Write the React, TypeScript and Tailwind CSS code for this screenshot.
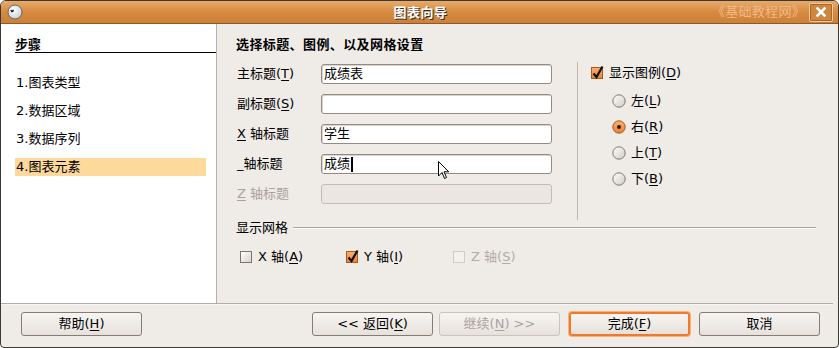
import React from 'react';

const font = { fontFamily: '"DejaVu Sans", "Noto Sans CJK SC", sans-serif' };

const U = ({ c }: { c: string }) => <span className="underline underline-offset-2">{c}</span>;

const CheckBox = ({ checked, disabled }: { checked?: boolean; disabled?: boolean }) => {
  if (checked) {
    return (
      <span className="relative inline-block w-[12px] h-[12px] border border-[#a4591d] bg-gradient-to-b from-[#f9ad6a] to-[#ee8434] shrink-0">
        <svg viewBox="0 0 14 14" className="absolute left-[-1px] top-[-3px] w-[14px] h-[14px] overflow-visible">
          <path d="M2.5 8.5 L5.5 12 L11.5 1.5" fill="none" stroke="#111" strokeWidth="2.2" strokeLinejoin="miter" />
        </svg>
      </span>
    );
  }
  return (
    <span
      className={`inline-block w-[12px] h-[12px] border shrink-0 ${
        disabled ? 'border-[#d2cbc4] bg-[#f3f0ed]' : 'border-[#7d756d] bg-gradient-to-br from-white to-[#d8d3ce]'
      }`}
    />
  );
};

const Radio = ({ checked }: { checked?: boolean }) => (
  <svg viewBox="0 0 14 14" className="w-[14px] h-[14px] shrink-0">
    <defs>
      <linearGradient id="rg" x1="0" y1="0" x2="1" y2="1">
        <stop offset="0" stopColor="#ffffff" />
        <stop offset="1" stopColor="#cfc9c3" />
      </linearGradient>
      <linearGradient id="ro" x1="0" y1="0" x2="0" y2="1">
        <stop offset="0" stopColor="#fbb272" />
        <stop offset="1" stopColor="#ed7f2f" />
      </linearGradient>
    </defs>
    <circle cx="7" cy="7" r="6.2" fill={checked ? 'url(#ro)' : 'url(#rg)'} stroke={checked ? '#a4591d' : '#7f7871'} strokeWidth="1" />
    {checked && <circle cx="7" cy="7" r="2" fill="#222" />}
  </svg>
);

const Field = ({ label, value, disabled, caret }: { label: React.ReactNode; value?: string; disabled?: boolean; caret?: boolean }) => (
  <div className="flex items-center h-[20px]">
    <div className={`w-[84px] text-[13px] leading-[16px] ${disabled ? 'text-[#aaa39c]' : 'text-black'}`}>{label}</div>
    <div
      className={`w-[231px] h-[20px] rounded-[3px] border flex items-center pl-[2px] text-[13px] leading-[16px] ${
        disabled ? 'border-[#c4bcb4] bg-[#ebe6e1]' : 'border-[#978b7f] bg-white shadow-[inset_1px_1px_0_#d9d4cf]'
      }`}
    >
      {value}
      {caret && <span className="inline-block w-[2px] h-[15px] bg-black ml-[1px]" />}
    </div>
  </div>
);

const Button = ({ children, disabled, focus, className = '' }: { children: React.ReactNode; disabled?: boolean; focus?: boolean; className?: string }) => (
  <div
    className={`h-[24px] rounded-[3px] flex items-center justify-center text-[13px] leading-[16px] bg-gradient-to-b from-[#f6f4f2] via-[#efebe7] to-[#e6e1dc] ${
      focus ? 'border-2 border-[#f07a28] shadow-[0_0_0_1px_#f6b37c]' : disabled ? 'border border-[#cbc4bd] text-[#aaa39c]' : 'border border-[#877c71]'
    } ${className}`}
  >
    {children}
  </div>
);

export default function App() {
  return (
    <div style={font} className="w-[839px] h-[348px] overflow-hidden bg-[#efebe7] border border-[#3b3935] rounded-t-[6px] rounded-b-[4px] flex flex-col text-black select-none">
      {/* title bar */}
      <div className="relative h-[23px] shrink-0 bg-gradient-to-b from-[#e8aa6a] via-[#d68b40] to-[#cd8039] border-b border-[#8a5a2c] flex items-center">
        <svg viewBox="0 0 16 16" className="ml-[6px] w-[16px] h-[16px]">
          <defs>
            <radialGradient id="ic" cx="0.4" cy="0.35" r="0.7">
              <stop offset="0" stopColor="#ffffff" />
              <stop offset="1" stopColor="#c9cdd2" />
            </radialGradient>
          </defs>
          <circle cx="8" cy="8" r="7" fill="url(#ic)" stroke="#5f6670" strokeWidth="1" />
          <path d="M3.5 6.5 L7 6.2 M4 7.6 L6.5 7.4" stroke="#222" strokeWidth="1.1" />
        </svg>
        <div className="absolute left-0 right-0 top-0 h-[23px] flex items-center justify-center pointer-events-none">
          <span className="ml-[2px] text-[13px] font-bold text-white tracking-[0.5px] [text-shadow:1px_1px_0_#3b2a18]">图表向导</span>
        </div>
        <div className="ml-auto flex items-center">
          <span className="text-[13px] text-[#f2b98a] tracking-[0.3px] mr-[4px]">《基础教程网》</span>
          <div className="w-[24px] h-[19px] mr-[5px] rounded-[2px] border border-[#f3c79b] bg-[#cf8740] shadow-[inset_0_0_0_1px_#a86628] flex items-center justify-center">
            <svg viewBox="0 0 10 10" className="w-[10px] h-[10px]">
              <path d="M1.5 1.5 L8.5 8.5 M8.5 1.5 L1.5 8.5" stroke="#fff" strokeWidth="2.6" strokeLinecap="square" />
            </svg>
          </div>
        </div>
      </div>

      {/* main */}
      <div className="flex h-[279px] shrink-0">
        {/* steps */}
        <div className="w-[216px] bg-white border-r border-[#b9b1a9] shrink-0">
          <div className="ml-[14px] mt-[14px] border-b border-black text-[13px] leading-[14px] font-bold pb-[0px]">步骤</div>
          <div className="mt-[21px] flex flex-col gap-[10px] text-[13px]">
            <div className="ml-[14px] h-[18px] leading-[18px] pl-[1px]">1.图表类型</div>
            <div className="ml-[14px] h-[18px] leading-[18px] pl-[1px]">2.数据区域</div>
            <div className="ml-[14px] h-[18px] leading-[18px] pl-[1px]">3.数据序列</div>
            <div className="ml-[14px] w-[191px] h-[18px] leading-[18px] pl-[1px] bg-[#fdd99b]">4.图表元素</div>
          </div>
        </div>

        {/* content */}
        <div className="flex-1 flex flex-col">
          <div className="pl-[19px] pt-[14px] text-[13px] leading-[14px] font-bold tracking-[0.4px]">选择标题、图例、以及网格设置</div>

          <div className="mt-[10px] flex h-[158px]">
            <div className="relative w-[360px] pl-[20px] pt-[2px] flex flex-col gap-[10px]">
              <Field label={<>主标题(<U c="T" />)</>} value="成绩表" />
              <Field label={<>副标题(<U c="S" />)</>} value="" />
              <Field label={<><U c="X" /> 轴标题</>} value="学生" />
              <Field label="_轴标题" value="成绩" caret />
              <Field label={<><U c="Z" /> 轴标题</>} disabled />
              {/* mouse pointer */}
              <svg viewBox="0 0 12 19" className="absolute left-[221px] top-[99px] w-[12px] h-[19px]">
                <path d="M0.5 0.5 L0.5 15 L4 11.5 L6.5 17.5 L8.5 16.5 L6 10.8 L10.8 10.8 Z" fill="#fff" stroke="#000" strokeWidth="1" strokeLinejoin="round" />
              </svg>
            </div>
            <div className="border-l border-[#bdb6ae] pl-[13px] pt-[5px]">
              <div className="flex items-center h-[12px] gap-[6px] text-[13px]">
                <CheckBox checked />
                <span>显示图例(<U c="D" />)</span>
              </div>
              <div className="ml-[21px] mt-[15px] flex flex-col gap-[12px] text-[13px]">
                <div className="flex items-center h-[14px] gap-[5px]"><Radio /><span>左(<U c="L" />)</span></div>
                <div className="flex items-center h-[14px] gap-[5px]"><Radio checked /><span>右(<U c="R" />)</span></div>
                <div className="flex items-center h-[14px] gap-[5px]"><Radio /><span>上(<U c="T" />)</span></div>
                <div className="flex items-center h-[14px] gap-[5px]"><Radio /><span>下(<U c="B" />)</span></div>
              </div>
            </div>
          </div>

          <div className="mt-[1px] flex items-center pl-[19px] mr-[22px] h-[14px]">
            <span className="text-[13px] leading-[14px]">显示网格</span>
            <div className="flex-1 ml-[5px] h-[2px] border-t border-[#aaa39c] border-b border-b-white" />
          </div>

          <div className="mt-[16px] pl-[23px] flex items-center text-[13px] h-[12px]">
            <div className="w-[106px] flex items-center gap-[6px]">
              <CheckBox />
              <span>X 轴(<U c="A" />)</span>
            </div>
            <div className="w-[107px] flex items-center gap-[6px]">
              <CheckBox checked />
              <span>Y 轴(<U c="I" />)</span>
            </div>
            <div className="flex items-center gap-[6px] text-[#b3aca5]">
              <CheckBox disabled />
              <span>Z 轴(<U c="S" />)</span>
            </div>
          </div>
        </div>
      </div>

      {/* separator */}
      <div className="h-[2px] mr-[5px] border-t border-[#b3aca5] border-b border-b-[#f8f6f4] shrink-0" />

      {/* buttons */}
      <div className="mt-[7px] flex items-center">
        <Button className="ml-[20px] w-[121px]">帮助(<U c="H" />)</Button>
        <Button className="ml-[170px] w-[121px]">&lt;&lt; 返回(<U c="K" />)</Button>
        <Button disabled className="ml-[6px] w-[121px]">继续(<U c="N" />) &gt;&gt;</Button>
        <Button focus className="ml-[9px] w-[121px]">完成(<U c="F" />)</Button>
        <Button className="ml-[9px] w-[121px]">取消</Button>
      </div>
    </div>
  );
}
